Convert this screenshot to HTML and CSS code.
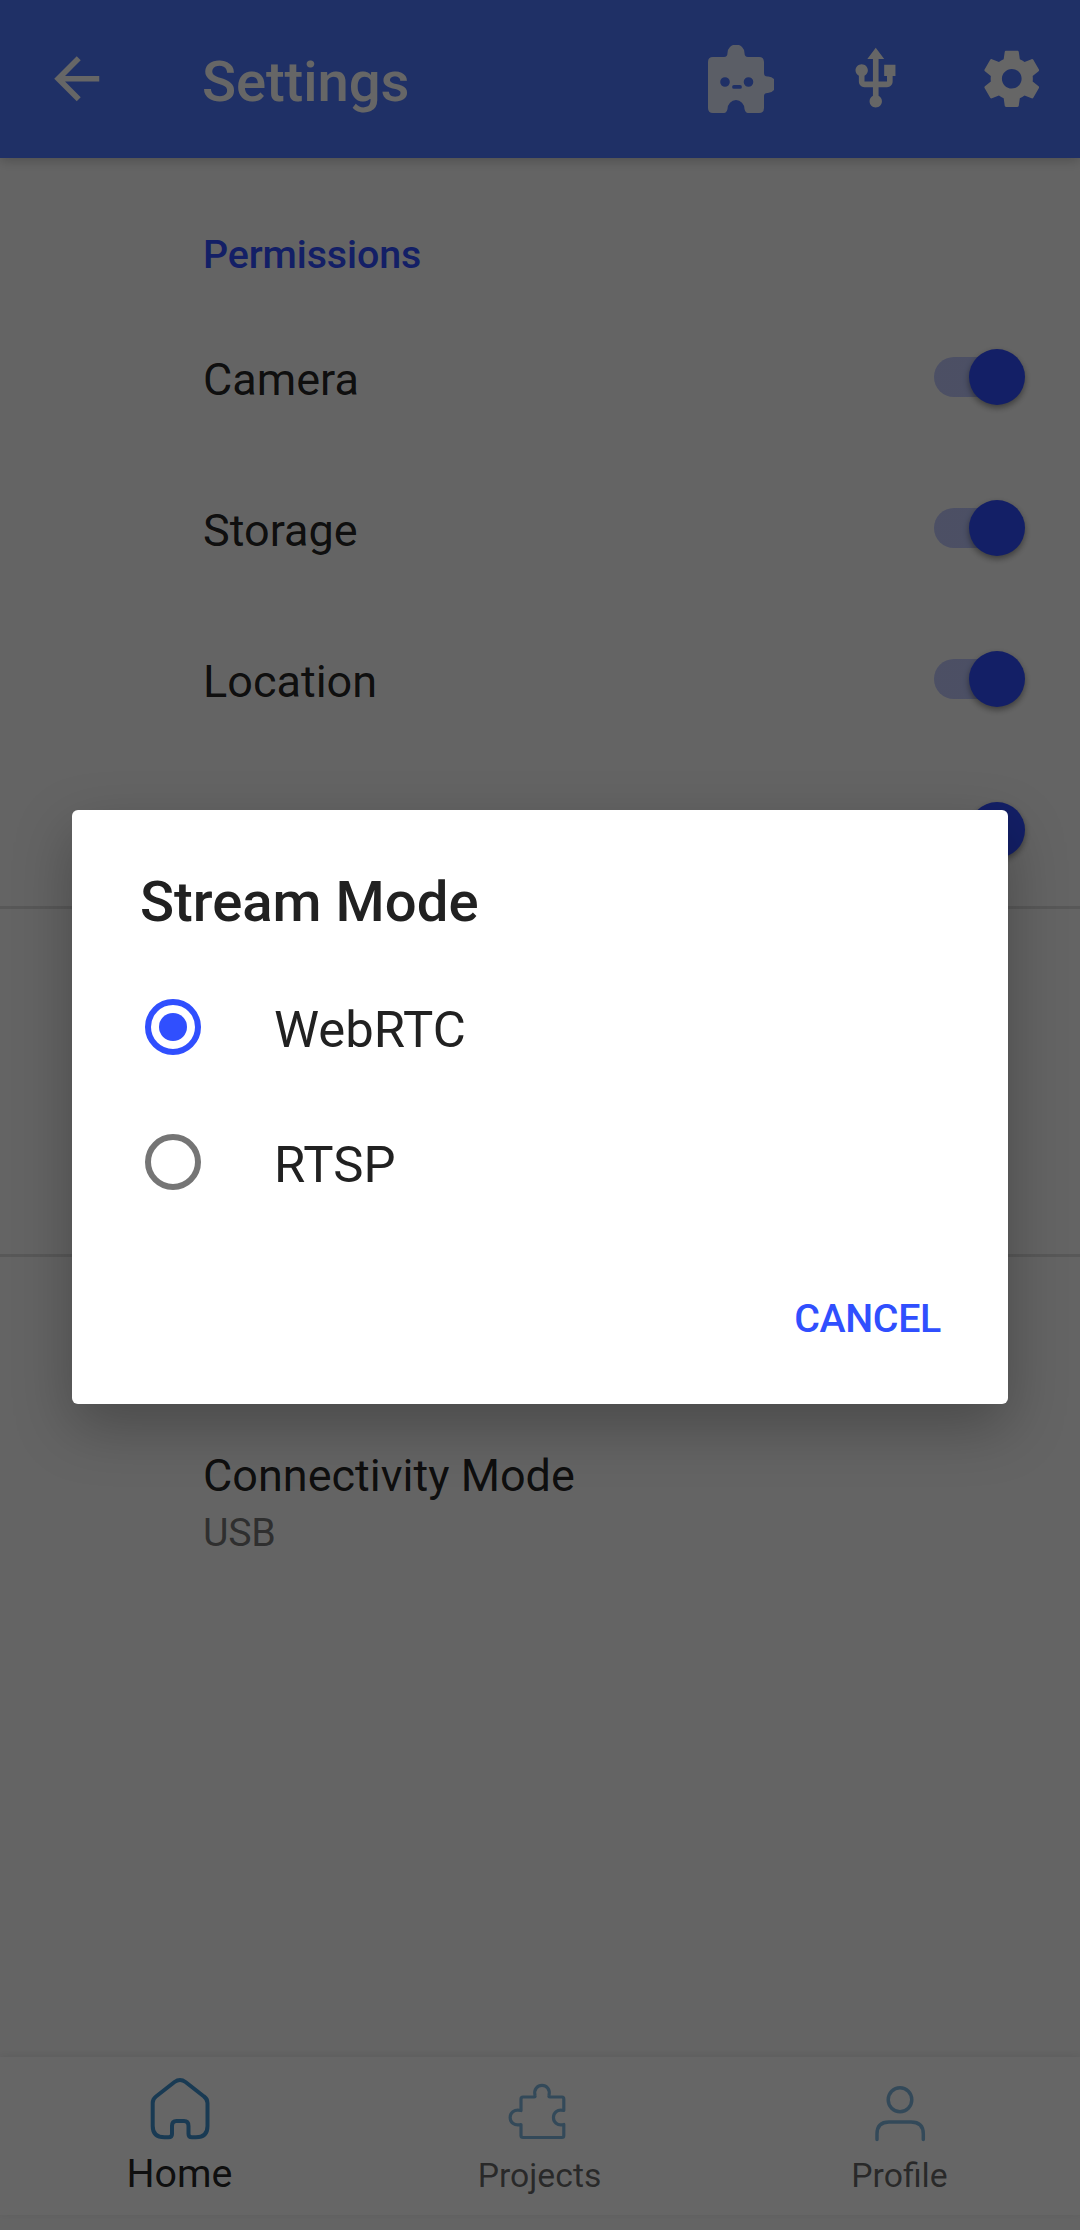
FILE: index.html
```html
<!DOCTYPE html>
<html lang="en">
<head>
<meta charset="utf-8">
<title>Settings</title>
<link rel="stylesheet" href="styles.css">
</head>
<body>
<div class="screen">
  <header class="app-bar">
    <svg class="icon back" viewBox="0 0 24 24"><path d="M20 11H7.83l5.59-5.59L12 4l-8 8 8 8 1.41-1.41L7.83 13H20z"/></svg>
    <h1 class="app-title">Settings</h1>
    <svg class="robot" viewBox="708 44 66 68"><path fill-rule="evenodd" d="M713 56H724Q727.500 56 727.500 52A8.500 8.500 0 0 1 744.500 52Q744.500 56 748 56H759Q764 56 764 61V72Q764 75.500 767.500 75.500A8 8 0 0 1 774 78V89A8 8 0 0 1 767.500 92Q764 92 764 95V107Q764 112 759 112H748Q745.500 112 744.500 108A8.500 9 0 0 0 727.500 108Q726.500 112 724 112H713Q708 112 708 107V61Q708 56 713 56ZM725 76.200A4.800 4.800 0 1 0 725 85.800 4.800 4.800 0 1 0 725 76.200ZM748.500 76.200A4.800 4.800 0 1 0 748.500 85.800 4.800 4.800 0 1 0 748.500 76.200ZM734 84A1.900 1.900 0 0 0 734 87.800H740A1.900 1.900 0 0 0 740 84Z"/></svg>
    <svg class="icon usb" viewBox="0 0 24 24"><path d="M15 7v4h1v2h-3V5h2l-3-4-3 4h2v8H8v-2.070c.7-.37 1.200-1.080 1.200-1.930 0-1.210-.99-2.200-2.200-2.200S4.800 7.790 4.800 9c0 .85.5 1.560 1.200 1.930V13c0 1.110.89 2 2 2h3v3.050c-.71.37-1.200 1.100-1.200 1.950 0 1.220.99 2.200 2.200 2.200s2.200-.98 2.200-2.200c0-.85-.49-1.580-1.200-1.950V15h3c1.110 0 2-.89 2-2v-2h1V7z"/></svg>
    <svg class="icon gear" viewBox="0 0 24 24"><path d="M19.430 12.980c.04-.32.07-.64.07-.98s-.03-.66-.07-.98l2.110-1.650c.19-.15.24-.42.12-.64l-2-3.460c-.12-.22-.39-.3-.61-.22l-2.490 1c-.52-.4-1.080-.73-1.690-.98l-.38-2.650C14.460 2.180 14.250 2 14 2h-4c-.25 0-.46.18-.49.42l-.38 2.650c-.61.25-1.170.59-1.690.98l-2.490-1c-.23-.09-.49 0-.61.22l-2 3.460c-.13.22-.07.49.12.64l2.110 1.650c-.04.32-.07.65-.07.98s.03.66.07.98l-2.110 1.650c-.19.15-.24.42-.12.64l2 3.460c.12.22.39.3.61.22l2.490-1c.52.4 1.080.73 1.690.98l.38 2.650c.03.24.24.42.49.42h4c.25 0 .46-.18.49-.42l.38-2.650c.61-.25 1.170-.59 1.690-.98l2.490 1c.23.09.49 0 .61-.22l2-3.460c.12-.22.07-.49-.12-.64l-2.110-1.650zM12 15.500c-1.930 0-3.500-1.570-3.500-3.500s1.570-3.500 3.500-3.500 3.500 1.570 3.500 3.500-1.570 3.500-3.500 3.500z"/></svg>
  </header>
  <main class="settings">
    <section class="group permissions">
      <h2 class="group-title">Permissions</h2>
      <div class="row"><span>Camera</span><span class="switch"></span></div>
      <div class="row"><span>Storage</span><span class="switch"></span></div>
      <div class="row"><span>Location</span><span class="switch"></span></div>
      <div class="row"><span></span><span class="switch"></span></div>
    </section>
    <section class="group stream"></section>
    <section class="group connection">
      <div class="label">Connectivity Mode</div>
      <div class="summary">USB</div>
    </section>
  </main>
  <nav class="bottom-nav">
    <div class="tab active">
      <svg class="tab-icon" viewBox="146 2070 68 76"><path stroke-width="4" d="M174.500 2082Q180 2078 185.500 2082L204 2096.500Q207.500 2099 207.500 2103V2126Q207.500 2137.300 196 2137.300H192Q188.500 2137.300 188.500 2134V2126Q188.500 2121 184 2121H176.500Q172 2121 172 2126V2134Q172 2137.300 168.500 2137.300H164.500Q152.700 2137.300 152.700 2126V2103Q152.700 2099 156 2096.500Z"/></svg>
      <span>Home</span>
    </div>
    <div class="tab">
      <svg class="tab-icon" viewBox="506 2070 68 76"><path stroke-width="3.200" d="M523 2097H534Q535.500 2097 535 2095.500C532 2082 552 2082 549 2095.500Q548.500 2097 550 2097H562Q563.800 2097 563.800 2099V2110.500C550 2107 550 2128 563.800 2124.500V2135.500Q563.800 2137.500 562 2137.500H523Q521 2137.500 521 2135.500V2124.500C506.500 2128 506.500 2107 521 2110.500V2099Q521 2097 523 2097Z"/></svg>
      <span>Projects</span>
    </div>
    <div class="tab">
      <svg class="tab-icon" viewBox="866 2070 68 76"><ellipse cx="900" cy="2099.700" rx="11.800" ry="12" stroke-width="3.500"/><path stroke-width="3.500" stroke-linecap="round" d="M877 2139.500V2134Q877 2122 889 2122H911Q923.300 2122 923.300 2134V2139.500"/></svg>
      <span>Profile</span>
    </div>
  </nav>
</div>
<div class="scrim">
  <div class="dialog" role="dialog" aria-label="Stream Mode">
    <h2 class="dialog-title">Stream Mode</h2>
    <div class="option"><span class="radio checked"></span><span>WebRTC</span></div>
    <div class="option"><span class="radio"></span><span>RTSP</span></div>
    <div class="actions"><span class="button">CANCEL</span></div>
  </div>
</div>
</body>
</html>
```
FILE: styles.css
```css
* { box-sizing: border-box; }
body { margin: 0; font-family: Roboto, "Liberation Sans", sans-serif; }
h1, h2 { margin: 0; font-weight: 500; }

.screen {
  width: 1080px;
  height: 2230px;
  display: flex;
  flex-direction: column;
  background: #fafafa;
  padding-bottom: 15px;
  overflow: hidden;
}

.app-bar {
  height: 158px;
  flex: none;
  display: flex;
  align-items: center;
  padding: 0 35px 1px 43px;
  background: #4e78ff;
  fill: #fff;
  box-shadow: 0 3px 11px rgba(0, 0, 0, .2);
}
.icon { width: 67.500px; height: 67.500px; flex: none; }
.app-title {
  margin: 7px auto 0 91.500px;
  font-size: 56.250px;
  line-height: 66px;
  letter-spacing: -.1px;
  color: #fff;
}
.robot { width: 66px; height: 68px; opacity: .85; }
.usb { margin: 0 68.500px 0 68px; }

.settings { flex: 1; display: flex; flex-direction: column; }
.group { border-bottom: 3px solid #dcdcdc; padding-left: 203px; }
.permissions { height: 751px; }
.group-title {
  height: 143px;
  padding-top: 74px;
  font-size: 39.375px;
  line-height: 46px;
  letter-spacing: -.1px;
  color: #304ffe;
}
.row {
  height: 151.200px;
  display: flex;
  align-items: center;
  justify-content: space-between;
  padding-right: 55px;
  font-size: 45px;
  color: rgba(0, 0, 0, .87);
}
.row > span:first-child { padding-top: 5px; }
.switch {
  width: 91px;
  height: 40px;
  border-radius: 20px;
  display: flex;
  align-items: center;
  justify-content: flex-end;
  background: linear-gradient(90deg, rgba(48, 79, 254, .3) 70%, transparent 70%);
}
.switch::after {
  content: "";
  width: 56px;
  height: 56px;
  flex: none;
  border-radius: 50%;
  background: #304ffe;
  box-shadow: 0 3px 6px rgba(0, 0, 0, .4);
}
.stream { height: 348px; }
.connection { border: 0; padding-top: 191px; }
.label { font-size: 45px; line-height: 56px; color: rgba(0, 0, 0, .87); }
.summary { font-size: 39.375px; line-height: 58px; letter-spacing: -.3px; color: rgba(0, 0, 0, .54); }

.bottom-nav {
  height: 158px;
  flex: none;
  display: flex;
  background: #fff;
  box-shadow: 0 -1px 8px rgba(0, 0, 0, .08);
}
.tab {
  flex: 1;
  display: flex;
  flex-direction: column;
  align-items: center;
  padding-top: 13px;
  font-size: 33.750px;
  line-height: 46px;
  color: rgba(0, 0, 0, .6);
}
.tab-icon {
  width: 68px;
  height: 76px;
  fill: none;
  stroke: #3f92cf;
  stroke-linejoin: round;
  opacity: .65;
}
.tab span { margin-top: 7px; margin-right: 1px; }
.tab.active { font-size: 39.375px; color: rgba(0, 0, 0, .87); }
.tab.active .tab-icon { opacity: 1; }
.tab.active span { margin-top: 5px; }

/* Modal layer covering the whole screen */
.scrim {
  position: absolute;
  inset: 0;
  height: 2230px;
  padding: 810px 72px 0;
  background: rgba(0, 0, 0, .6);
}
.dialog {
  height: 594px;
  padding: 59px 67px 0 68px;
  border-radius: 6px;
  background: #fff;
  box-shadow: 0 22px 58px rgba(0, 0, 0, .27);
  color: #212121;
}
.dialog-title { font-size: 56.250px; line-height: 66px; margin-bottom: 24.500px; }
.option {
  height: 135px;
  display: flex;
  align-items: center;
  gap: 73px;
  padding-left: 5px;
  font-size: 50.800px;
}
.option span:last-child { padding-top: 4px; }
.radio {
  width: 56px;
  height: 56px;
  flex: none;
  display: grid;
  place-items: center;
  border: 6px solid #757575;
  border-radius: 50%;
}
.radio.checked { border-color: #304ffe; }
.radio.checked::after {
  content: "";
  width: 28px;
  height: 28px;
  border-radius: 50%;
  background: #304ffe;
}
.actions {
  display: flex;
  justify-content: flex-end;
  padding-top: 66px;
}
.button {
  font-size: 39.375px;
  line-height: 46px;
  font-weight: 500;
  letter-spacing: -.35px;
  color: #304ffe;
}
```
